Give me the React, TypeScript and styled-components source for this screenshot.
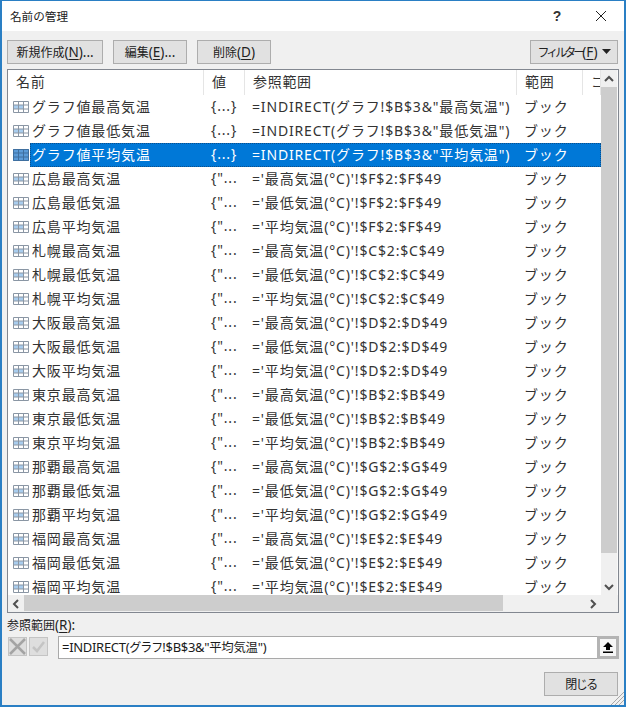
import React from "react";
import styled, { createGlobalStyle } from "styled-components";

const FONT = `"Noto Sans", "Noto Sans CJK JP", sans-serif`;

const Global = createGlobalStyle`
  html, body { margin: 0; padding: 0; background: #f0f0f0; }
  body { font-family: ${FONT}; }
`;

const Win = styled.div`
  box-sizing: border-box;
  width: 626px;
  height: 707px;
  border: 1px solid #2a7fc4;
  border-left-width: 2px;
  border-right-width: 2px;
  border-bottom-width: 2px;
  background: #f0f0f0;
  display: flex;
  flex-direction: column;
  position: relative;
  overflow: hidden;
  color: #1a1a1a;
`;
const TitleBar = styled.div`
  height: 30px;
  background: #fff;
  display: flex;
  align-items: center;
  padding-left: 8px;
  flex: none;
`;
const Title = styled.div`
  font-size: 11.6px;
  flex: 1;
  padding-bottom: 1px;
`;
const Help = styled.div`
  width: 46px;
  text-align: center;
  font-size: 14px;
  font-weight: 700;
  color: #333;
  font-family: "Liberation Sans", sans-serif;
  margin-right: -2px;
`;
const CloseX = styled.div`
  width: 46px;
  height: 30px;
  display: flex;
  align-items: center;
  justify-content: center;
`;
const Toolbar = styled.div`
  display: flex;
  padding: 9px 6px 0 5px;
  height: 24px;
  flex: none;
`;
const Btn = styled.div<{ $w: number; $ml?: number }>`
  box-sizing: border-box;
  width: ${(p) => p.$w}px;
  margin-left: ${(p) => p.$ml ?? 0}px;
  height: 24px;
  background: #e1e1e1;
  border: 1px solid #adadad;
  display: flex;
  align-items: center;
  justify-content: center;
  font-size: 12px;
  white-space: nowrap;
  color: #222;
`;
const Accel = styled.span`
  font-size: 13.5px;
  u { text-underline-offset: 2px; }
`;
const NarrowKana = styled.span<{ $ls: number }>`
  letter-spacing: ${(p) => p.$ls}px;
`;
const Spacer = styled.div`
  flex: 1;
`;
const ListFrame = styled.div`
  box-sizing: border-box;
  margin: 5px 0 0 5px;
  width: 612px;
  height: 544px;
  border: 1px solid #828790;
  background: #fff;
  display: grid;
  grid-template-columns: 593px 17px;
  grid-template-rows: 525px 17px;
  flex: none;
`;
const Viewport = styled.div`
  overflow: hidden;
  background: #fff;
`;
const HeadRow = styled.div`
  display: flex;
  height: 25px;
  font-size: 14px;
  color: #333;
`;
const HeadCell = styled.div<{ $w: number }>`
  box-sizing: border-box;
  width: ${(p) => p.$w}px;
  flex: none;
  padding: 0 0 3px 8px;
  border-right: 1px solid #e5e5e5;
  display: flex;
  align-items: center;
  white-space: nowrap;
  letter-spacing: 0.7px;
  overflow: hidden;
`;
const Row = styled.div<{ $sel?: boolean }>`
  display: flex;
  height: 24px;
  align-items: center;
  font-size: 14px;
  letter-spacing: 0.84px;
  color: ${(p) => (p.$sel ? "#fff" : "#333")};
  white-space: nowrap;
`;
const IconCell = styled.div`
  width: 22px;
  height: 24px;
  flex: none;
  display: flex;
  align-items: center;
  padding: 0 0 0 5px;
  box-sizing: border-box;
`;
const Selectable = styled.div<{ $sel?: boolean }>`
  display: flex;
  height: 100%;
  align-items: center;
  width: 571px;
  padding-left: 2px;
  padding-bottom: 3px;
  box-sizing: border-box;
  background: ${(p) => (p.$sel ? "#0078d7" : "transparent")};
  outline: ${(p) => (p.$sel ? "1px dotted #0d4f8a" : "none")};
  outline-offset: -1px;
`;
const Cell = styled.div<{ $w: number; $pl?: number }>`
  width: ${(p) => p.$w}px;
  padding-left: ${(p) => p.$pl ?? 0}px;
  box-sizing: border-box;
  flex: none;
  overflow: hidden;
`;
const VBar = styled.div`
  background: #f0f0f0;
  border-right: 1px solid #fafafa;
  display: flex;
  flex-direction: column;
  align-items: stretch;
`;
const ArrowBox = styled.div`
  width: 16px;
  height: 17px;
  flex: none;
  display: flex;
  align-items: center;
  justify-content: center;
`;
const VThumb = styled.div`
  height: 466px;
  background: #cdcdcd;
`;
const VFill = styled.div`
  flex: 1;
`;
const HBar = styled.div`
  background: #f0f0f0;
  display: flex;
  padding-bottom: 1px;
`;
const HThumb = styled.div`
  width: 479px;
  background: #cdcdcd;
`;
const Corner = styled.div`
  background: #f0f0f0;
`;
const RefLabel = styled.div`
  font-size: 12px;
  margin: 2px 0 0 5px;
  height: 20px;
  line-height: 20px;
  flex: none;
  color: #222;
`;
const RefRow = styled.div`
  display: flex;
  margin: 1px 0 0 6px;
  height: 23px;
  flex: none;
`;
const MarkBtn = styled.div`
  box-sizing: border-box;
  width: 19px;
  height: 19px;
  margin: 1px 2px 0 0;
  background: #dedede;
  border: 1px solid #c4c4c4;
  display: flex;
  align-items: center;
  justify-content: center;
`;
const RefInput = styled.div`
  box-sizing: border-box;
  margin-left: 8px;
  width: 539px;
  height: 23px;
  background: #fff;
  border: 1px solid #a9a9a9;
  border-right: none;
  font-size: 13px;
  letter-spacing: -0.3px;
  line-height: 20px;
  padding-left: 3px;
  color: #1a1a1a;
  white-space: nowrap;
`;
const RefJp = styled.span`
  font-size: 12.4px;
`;
const RefKana = styled.span`
  font-size: 12px;
  letter-spacing: -1px;
`;
const RefBtn = styled.div`
  box-sizing: border-box;
  width: 22px;
  height: 23px;
  background: #f6f6f6;
  border: 3px solid #b4b4b4;
  display: flex;
  align-items: center;
  justify-content: center;
`;
const Footer = styled.div`
  display: flex;
  justify-content: flex-end;
  padding: 13px 6px 0 0;
  flex: none;
`;
const Grip = styled.svg`
  position: absolute;
  right: 0;
  bottom: 0;
`;

const TableIcon = ({ sel }: { sel?: boolean }) => (
  <svg width="16" height="12" viewBox="0 0 16 12">
    <rect x="0" y="0" width="16" height="12" fill={sel ? "#5b9bd8" : "#fff"} />
    <rect x="1" y="4" width="10" height="4" fill={sel ? "#5b9bd8" : "#a9cdee"} />
    <path
      d="M0.5 0.5H15.5V11.5H0.5ZM0.5 4H15.5M0.5 8H15.5M5.5 0.5V11.5M10.5 0.5V11.5"
      stroke={sel ? "#3f6f9f" : "#8a96a4"}
      strokeWidth="1"
      fill="none"
    />
  </svg>
);

const rows: [string, string, string][] = [
  ["グラフ値最高気温", "{...}", `=INDIRECT(グラフ!$B$3&"最高気温")`],
  ["グラフ値最低気温", "{...}", `=INDIRECT(グラフ!$B$3&"最低気温")`],
  ["グラフ値平均気温", "{...}", `=INDIRECT(グラフ!$B$3&"平均気温")`],
  ["広島最高気温", `{"...`, `='最高気温(°C)'!$F$2:$F$49`],
  ["広島最低気温", `{"...`, `='最低気温(°C)'!$F$2:$F$49`],
  ["広島平均気温", `{"...`, `='平均気温(°C)'!$F$2:$F$49`],
  ["札幌最高気温", `{"...`, `='最高気温(°C)'!$C$2:$C$49`],
  ["札幌最低気温", `{"...`, `='最低気温(°C)'!$C$2:$C$49`],
  ["札幌平均気温", `{"...`, `='平均気温(°C)'!$C$2:$C$49`],
  ["大阪最高気温", `{"...`, `='最高気温(°C)'!$D$2:$D$49`],
  ["大阪最低気温", `{"...`, `='最低気温(°C)'!$D$2:$D$49`],
  ["大阪平均気温", `{"...`, `='平均気温(°C)'!$D$2:$D$49`],
  ["東京最高気温", `{"...`, `='最高気温(°C)'!$B$2:$B$49`],
  ["東京最低気温", `{"...`, `='最低気温(°C)'!$B$2:$B$49`],
  ["東京平均気温", `{"...`, `='平均気温(°C)'!$B$2:$B$49`],
  ["那覇最高気温", `{"...`, `='最高気温(°C)'!$G$2:$G$49`],
  ["那覇最低気温", `{"...`, `='最低気温(°C)'!$G$2:$G$49`],
  ["那覇平均気温", `{"...`, `='平均気温(°C)'!$G$2:$G$49`],
  ["福岡最高気温", `{"...`, `='最高気温(°C)'!$E$2:$E$49`],
  ["福岡最低気温", `{"...`, `='最低気温(°C)'!$E$2:$E$49`],
  ["福岡平均気温", `{"...`, `='平均気温(°C)'!$E$2:$E$49`],
];

const Chevron = ({ d }: { d: string }) => (
  <svg width="10" height="10" viewBox="0 0 10 10">
    <path d={d} fill="none" stroke="#505050" strokeWidth="2" />
  </svg>
);

export default function App() {
  return (
    <>
      <Global />
      <Win>
        <TitleBar>
          <Title>名前の管理</Title>
          <Help>?</Help>
          <CloseX>
            <svg width="12" height="12" viewBox="0 0 12 12">
              <path d="M1 1L11 11M11 1L1 11" stroke="#222" strokeWidth="1" fill="none" />
            </svg>
          </CloseX>
        </TitleBar>
        <Toolbar>
          <Btn $w={96}>新規作成<Accel>(<u>N</u>)...</Accel></Btn>
          <Btn $w={74} $ml={10}>編集<Accel>(<u>E</u>)...</Accel></Btn>
          <Btn $w={74} $ml={10}>削除<Accel>(<u>D</u>)</Accel></Btn>
          <Spacer />
          <Btn $w={88}>
            <NarrowKana $ls={-3}>フィルター</NarrowKana>
            <Accel>(<u>F</u>)</Accel>
            <svg width="9" height="6" viewBox="0 0 9 6" style={{ marginLeft: 4 }}>
              <path d="M0 0H9L4.5 5Z" fill="#222" />
            </svg>
          </Btn>
        </Toolbar>
        <ListFrame>
          <Viewport>
            <HeadRow>
              <HeadCell $w={196}>名前</HeadCell>
              <HeadCell $w={41}>値</HeadCell>
              <HeadCell $w={272}>参照範囲</HeadCell>
              <HeadCell $w={66}>範囲</HeadCell>
              <HeadCell $w={18}>コメント</HeadCell>
            </HeadRow>
            {rows.map(([n, v, r], i) => {
              const sel = i === 2;
              return (
                <Row key={n} $sel={sel}>
                  <IconCell><TableIcon sel={sel} /></IconCell>
                  <Selectable $sel={sel}>
                    <Cell $w={172} $pl={0}>{n}</Cell>
                    <Cell $w={41} $pl={7}>{v}</Cell>
                    <Cell $w={272} $pl={7}>{r}</Cell>
                    <Cell $w={66} $pl={7}>ブック</Cell>
                  </Selectable>
                </Row>
              );
            })}
          </Viewport>
          <VBar>
            <ArrowBox><Chevron d="M1 7L5 3L9 7" /></ArrowBox>
            <VThumb />
            <VFill />
            <ArrowBox><Chevron d="M1 3L5 7L9 3" /></ArrowBox>
          </VBar>
          <HBar>
            <ArrowBox><Chevron d="M7 1L3 5L7 9" /></ArrowBox>
            <HThumb />
            <VFill />
            <ArrowBox><Chevron d="M3 1L7 5L3 9" /></ArrowBox>
          </HBar>
          <Corner />
        </ListFrame>
        <RefLabel>参照範囲<Accel>(<u>R</u>):</Accel></RefLabel>
        <RefRow>
          <MarkBtn>
            <svg width="17" height="17" viewBox="0 0 17 17">
              <path d="M1 1L16 16M16 1L1 16" stroke="#a4a4a4" strokeWidth="2.5" fill="none" />
            </svg>
          </MarkBtn>
          <MarkBtn>
            <svg width="15" height="15" viewBox="0 0 15 15">
              <path d="M2 8L6 12L13 3" stroke="#c4c4c4" strokeWidth="2.5" fill="none" />
            </svg>
          </MarkBtn>
          <RefInput>
            =INDIRECT(<RefKana>グラフ</RefKana>!$B$3&amp;"<RefJp>平均気温</RefJp>")
          </RefInput>
          <RefBtn>
            <svg width="10" height="11" viewBox="0 0 10 11">
              <path d="M5 0L10 5H7V8H3V5H0ZM0 9.5H10V11H0Z" fill="#000" />
            </svg>
          </RefBtn>
        </RefRow>
        <Footer>
          <Btn $w={74}><NarrowKana $ls={-1.5}>閉じる</NarrowKana></Btn>
        </Footer>
        <Grip width="14" height="14" viewBox="0 0 14 14">
          <path d="M14 1L1 14M14 5L5 14M14 9L9 14" stroke="#a8a8a8" strokeWidth="1" fill="none" />
        </Grip>
      </Win>
    </>
  );
}
